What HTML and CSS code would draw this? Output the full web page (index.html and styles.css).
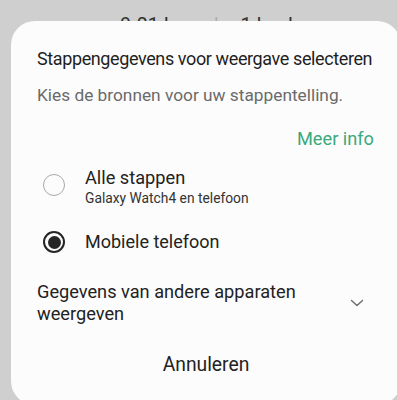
FILE: index.html
```html
<!DOCTYPE html>
<html>
<head>
<meta charset="utf-8">
<link rel="stylesheet" href="styles.css">
</head>
<body>
<div class="screen">
  <div class="behind"><span>9.01 km</span><span class="sep">|</span><span>1 kcal</span></div>
  <div class="card">
    <div class="title">Stappengegevens voor weergave selecteren</div>
    <div class="desc">Kies de bronnen voor uw stappentelling.</div>
    <div class="more-row"><span class="more">Meer info</span></div>
    <div class="option option-1">
      <span class="radio"></span>
      <div class="opt-text">
        <div class="opt-main">Alle stappen</div>
        <div class="opt-sub">Galaxy Watch4 en telefoon</div>
      </div>
    </div>
    <div class="option option-2">
      <span class="radio checked"></span>
      <div class="opt-text">
        <div class="opt-main">Mobiele telefoon</div>
      </div>
    </div>
    <div class="expand">
      <div class="expand-text">Gegevens van andere apparaten weergeven</div>
      <svg class="chevron" width="14" height="8" viewBox="0 0 14 8"><path d="M1.5 1.5 L7 6.5 L12.5 1.5" fill="none" stroke="#6a6a6a" stroke-width="1.4" stroke-linecap="round" stroke-linejoin="round"/></svg>
    </div>
    <div class="actions"><span class="cancel">Annuleren</span></div>
  </div>
</div>
</body>
</html>
```
FILE: styles.css
```css
html, body {
  margin: 0;
  padding: 0;
}
body {
  background: #cfcfcf;
  font-family: Roboto, "Noto Sans", sans-serif;
  width: 397px;
  height: 400px;
  overflow: hidden;
}
.screen {
  position: relative;
  width: 397px;
  height: 400px;
  overflow: hidden;
}
.behind {
  position: absolute;
  left: 120px;
  top: 13px;
  font-size: 20px;
  color: #333;
  display: flex;
  gap: 22px;
  white-space: nowrap;
}
.behind .sep {
  color: #aaa;
}
.card {
  position: absolute;
  left: 11px;
  top: 21px;
  width: 390px;
  height: 384px;
  background: #fcfcfc;
  border-radius: 24px;
  box-sizing: border-box;
  padding: 26px 0 0 26px;
  color: #222;
}
.title {
  font-size: 18px;
  line-height: 24px;
  letter-spacing: -0.39px;
  color: #1f1f1f;
  white-space: nowrap;
}
.desc {
  margin-top: 13px;
  font-size: 17.3px;
  line-height: 22px;
  color: #6a6a6a;
}
.more-row {
  display: flex;
  justify-content: flex-end;
  padding-right: 27px;
  margin-top: 21px;
}
.more {
  font-size: 18.2px;
  line-height: 24px;
  color: #3aa97c;
}
.option {
  display: flex;
  padding-left: 6px;
}
.option-1 {
  margin-top: 16px;
  align-items: flex-start;
}
.option-1 .radio {
  margin-top: 7px;
}
.option-2 {
  margin-top: 24px;
  align-items: center;
}
.radio {
  width: 22px;
  height: 22px;
  border: 1.5px solid #a9a9a9;
  border-radius: 50%;
  box-sizing: border-box;
  flex: none;
  position: relative;
}
.radio.checked {
  border: 2px solid #252525;
}
.radio.checked::after {
  content: "";
  position: absolute;
  left: 2.5px;
  top: 2.5px;
  width: 13px;
  height: 13px;
  border-radius: 50%;
  background: #252525;
}
.opt-text {
  margin-left: 20px;
}
.opt-main {
  font-size: 18.2px;
  line-height: 22px;
  color: #222;
}
.option-2 .opt-main {
  font-size: 18px;
}
.opt-sub {
  font-size: 13.8px;
  line-height: 18px;
  color: #333;
}
.expand {
  display: flex;
  align-items: center;
  margin-top: 28px;
  padding-right: 37px;
}
.expand-text {
  width: 290px;
  font-size: 18.2px;
  line-height: 21.5px;
  color: #222;
}
.chevron {
  margin-left: auto;
}
.actions {
  display: flex;
  justify-content: center;
  margin-top: 29px;
  margin-left: -26px;
}
.cancel {
  font-size: 19.3px;
  line-height: 24px;
  color: #222;
}
```
